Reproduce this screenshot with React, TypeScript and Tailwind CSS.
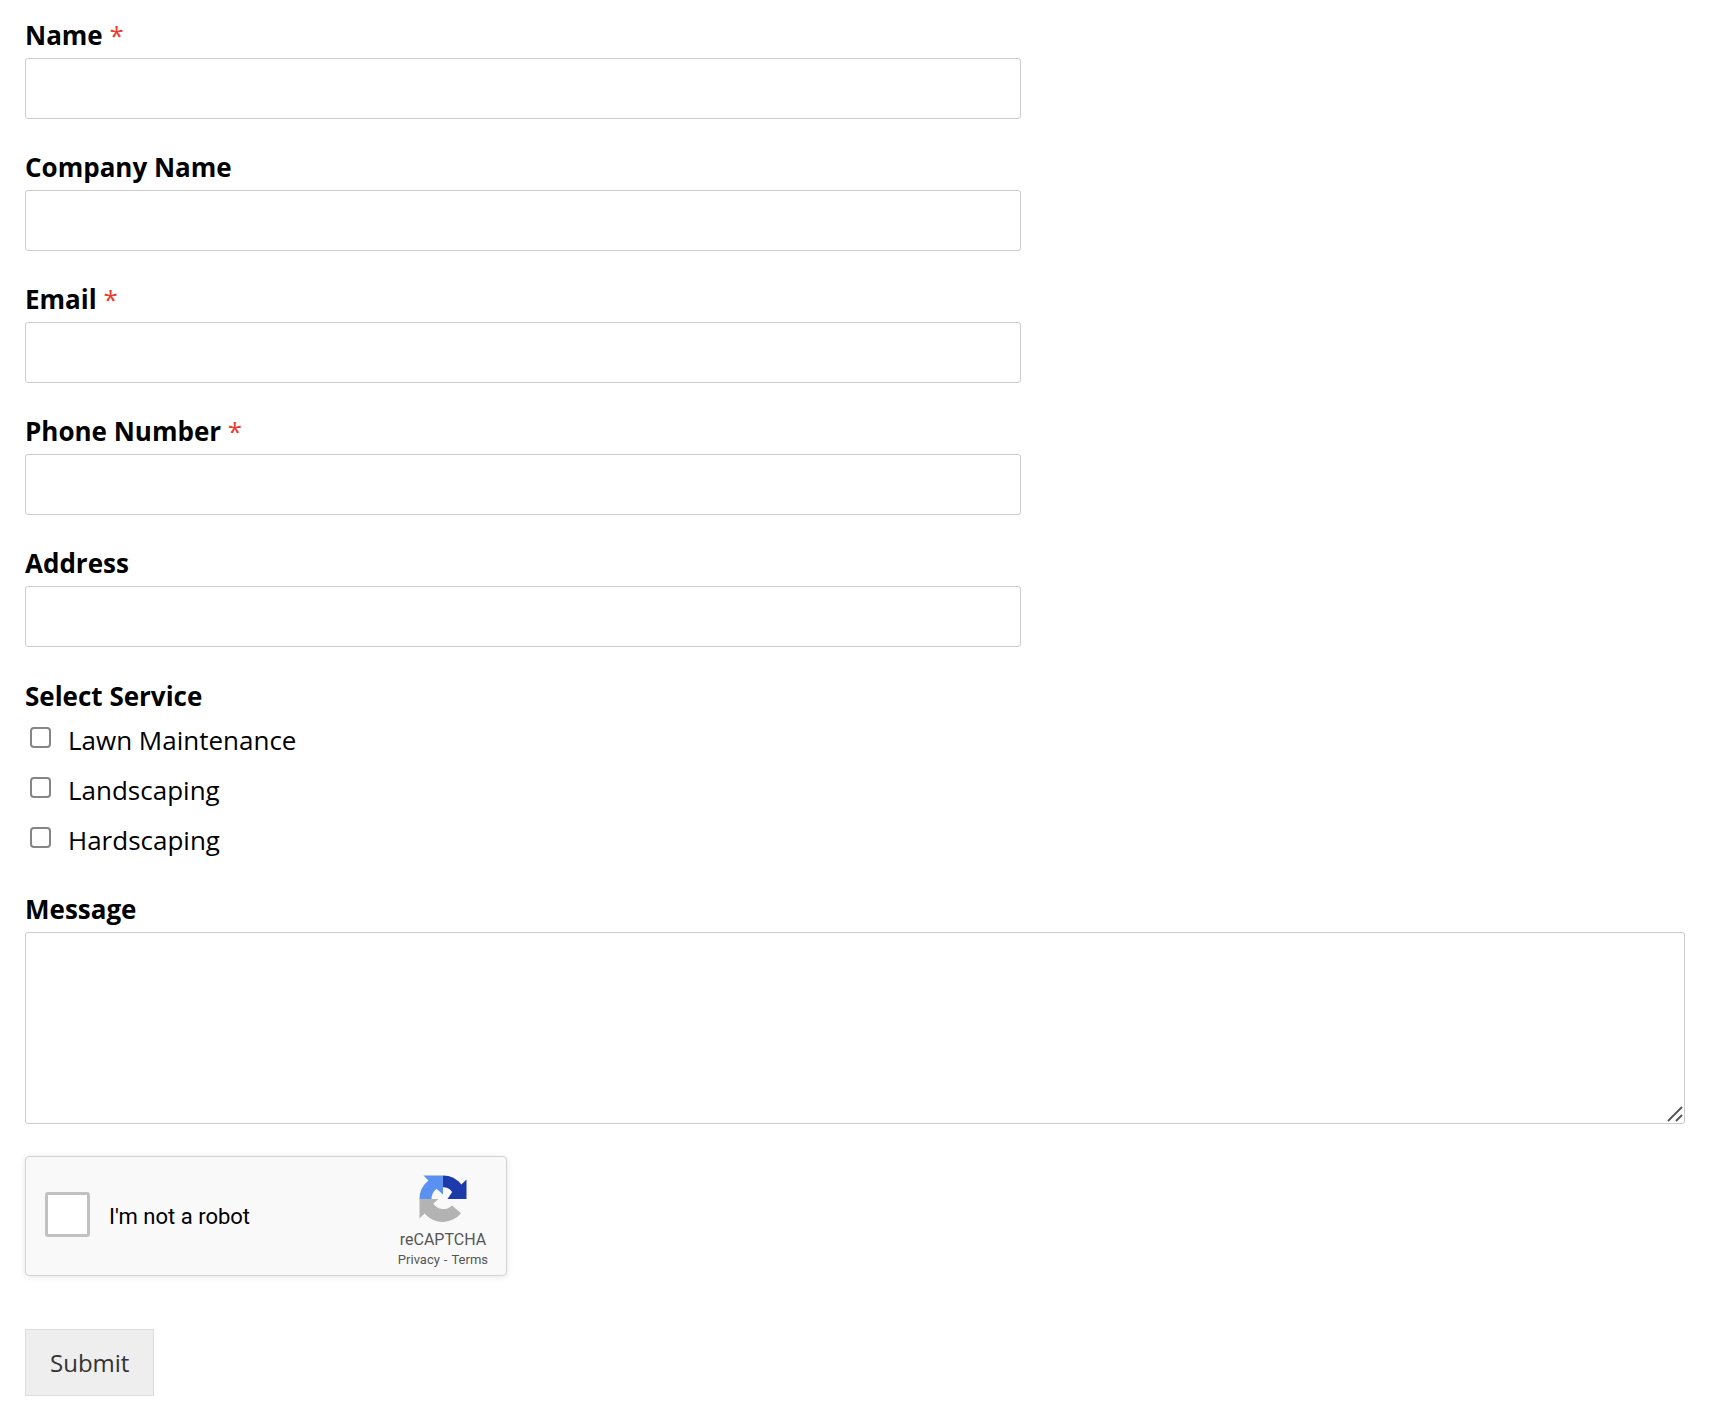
import { useState } from 'react';

interface Field {
  id: string;
  label: string;
  type: string;
  required?: boolean;
}

const fields: Field[] = [
  { id: 'name', label: 'Name', type: 'text', required: true },
  { id: 'company', label: 'Company Name', type: 'text' },
  { id: 'email', label: 'Email', type: 'email', required: true },
  { id: 'phone', label: 'Phone Number', type: 'tel', required: true },
  { id: 'address', label: 'Address', type: 'text' },
];

const services = ['Lawn Maintenance', 'Landscaping', 'Hardscaping'];

const checkboxClass =
  'shrink-0 cursor-pointer appearance-none bg-white checked:bg-[#1a73e8]';

function TextField({ id, label, type, required }: Field) {
  return (
    <div className="flex flex-col gap-1">
      <label htmlFor={id} className="h-9 font-bold">
        {label}
        {required && <span className="font-normal text-[#f03a2e]"> *</span>}
      </label>
      <input
        id={id}
        name={id}
        type={type}
        required={required}
        className="h-[61px] w-3/5 rounded-[3px] border border-[#ccc] bg-white px-5 outline-none focus:border-[#999]"
      />
    </div>
  );
}

function RecaptchaLogo() {
  return (
    <svg viewBox="0 0 48 48" className="size-12" aria-hidden="true">
      <path
        fill="#1c3aa9"
        d="M47.5 24V4.500l-5.100 5.100A23.500 23.500 0 0 0 24 .5v11.800c3.500 0 6.200.9 9.200 4.700l-4.700 7z"
      />
      <path
        fill="#5a91f0"
        d="M24 .5H4.500L9.500 5.500A23.500 23.500 0 0 0 .5 24h12c0-4 1.500-7.500 5-10.300L24 19.500z"
      />
      <path
        fill="#b3b3b3"
        d="M.5 24v19.500l5.100-5.100A23.500 23.500 0 0 0 42 38.200L33 30.500A12 12 0 0 1 14.300 28.500L19.500 24z"
      />
    </svg>
  );
}

function Recaptcha() {
  return (
    <div className="flex h-[120px] w-[482px] max-w-full items-center justify-between rounded-[4px] border border-[#d3d3d3] bg-[#f9f9f9] pr-[18px] pl-[19px] font-[Roboto,sans-serif] shadow-[0_1px_6px_rgba(0,0,0,0.1)]">
      <div className="flex items-start gap-[19px] pb-1 text-[22px] text-black">
        <input
          id="robot"
          type="checkbox"
          name="recaptcha"
          className={`${checkboxClass} size-[45px] rounded-[3px] border-[3px] border-[#c1c1c1]`}
        />
        <label htmlFor="robot" className="cursor-pointer pt-2">
          I&apos;m not a robot
        </label>
      </div>
      <div className="flex flex-col items-center pt-[10px] text-[#555]">
        <RecaptchaLogo />
        <span className="mt-[5px] text-base leading-6">reCAPTCHA</span>
        <span className="flex gap-1 text-[13px] leading-[15px]">
          <a href="#privacy">Privacy</a>
          <span>-</span>
          <a href="#terms">Terms</a>
        </span>
      </div>
    </div>
  );
}

export default function App() {
  const [selected, setSelected] = useState<string[]>([]);

  const toggleService = (service: string) => {
    setSelected((prev) =>
      prev.includes(service) ? prev.filter((item) => item !== service) : [...prev, service],
    );
  };

  return (
    <main className="bg-white pt-[18px] pr-[33px] pb-4 pl-[25px] font-['Open_Sans',sans-serif] text-[26px] leading-[34px] text-black">
      <form onSubmit={(e) => e.preventDefault()}>
        <div className="flex flex-col gap-[31px]">
          {fields.map((field) => (
            <TextField key={field.id} {...field} />
          ))}
        </div>

        <fieldset className="mt-8">
          <legend className="h-9 font-bold">Select Service</legend>
          <div className="mt-2 flex flex-col gap-4">
            {services.map((service) => (
              <label key={service} className="flex w-fit cursor-pointer gap-[17px] pl-[5px]">
                <input
                  type="checkbox"
                  name="service"
                  value={service}
                  checked={selected.includes(service)}
                  onChange={() => toggleService(service)}
                  className={`${checkboxClass} mt-1 size-[21px] rounded-[4px] border-2 border-[#858585]`}
                />
                {service}
              </label>
            ))}
          </div>
        </fieldset>

        <div className="mt-[35px] flex flex-col gap-1">
          <label htmlFor="message" className="h-9 font-bold">
            Message
          </label>
          <div className="relative">
            <textarea
              id="message"
              name="message"
              className="block h-48 w-full resize-none rounded-[3px] border border-[#ccc] bg-white p-5 outline-none focus:border-[#999]"
            />
            {/* resize grip */}
            <svg
              viewBox="0 0 16 16"
              className="pointer-events-none absolute right-0.5 bottom-0.5 size-4"
              aria-hidden="true"
            >
              <path d="M1 15L15 1M9 15l6-6" stroke="#555" strokeWidth="1.800" fill="none" />
            </svg>
          </div>
        </div>

        <div className="mt-8">
          <Recaptcha />
        </div>

        <button
          type="submit"
          className="mt-[53px] h-[67px] cursor-pointer border border-[#ddd] bg-[#eee] px-6 text-2xl text-[#333]"
        >
          Submit
        </button>
      </form>
    </main>
  );
}
